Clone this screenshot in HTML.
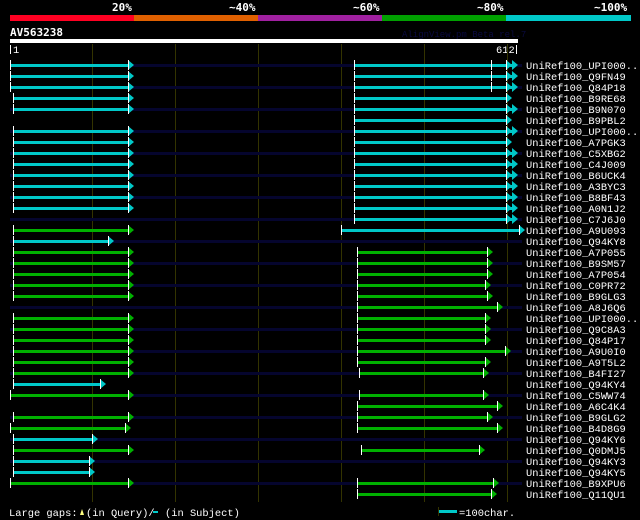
<!DOCTYPE html>
<html><head><meta charset="utf-8"><style>
html,body{margin:0;padding:0;background:#000;width:640px;height:520px;overflow:hidden}
svg{display:block}
text{font-family:"Liberation Mono","DejaVu Sans Mono",monospace;fill:#fff}
.l{font-size:10.4px}
.b{font-size:11px;font-weight:bold;font-family:"DejaVu Sans Mono",monospace}
</style></head><body>
<svg width="640" height="520" viewBox="0 0 640 520">
<text class="b" x="112" y="11">20%</text>
<text class="b" x="229" y="11">~40%</text>
<text class="b" x="353" y="11">~60%</text>
<text class="b" x="477" y="11">~80%</text>
<text class="b" x="594" y="11">~100%</text>
<rect x="10" y="15" width="124" height="6" fill="#ff0022"/>
<rect x="134" y="15" width="124" height="6" fill="#e06000"/>
<rect x="258" y="15" width="124" height="6" fill="#a020a0"/>
<rect x="382" y="15" width="124" height="6" fill="#00a000"/>
<rect x="506" y="15" width="125" height="6" fill="#00c8c8"/>
<text class="b" x="10" y="36">AV563238</text>
<text x="402" y="37" style="font-size:9px;fill:#0a0a40">AlignView.pm Beta rel.7</text>
<rect x="10" y="39" width="508" height="4" fill="#fff"/>
<rect x="10" y="45" width="1" height="9" fill="#fff"/>
<text class="l" x="13" y="53">1</text>
<text class="l" x="496" y="53">612</text>
<rect x="516" y="45" width="1" height="9" fill="#fff"/>
<g fill="#333300">
<rect x="92" y="44" width="1" height="458"/>
<rect x="175" y="44" width="1" height="458"/>
<rect x="258" y="44" width="1" height="458"/>
<rect x="341" y="44" width="1" height="458"/>
<rect x="424" y="44" width="1" height="458"/>
<rect x="507" y="44" width="1" height="458"/>
</g>
<g fill="#05052e">
<rect x="10" y="64" width="512" height="3"/>
<rect x="10" y="86" width="512" height="3"/>
<rect x="10" y="108" width="512" height="3"/>
<rect x="10" y="130" width="512" height="3"/>
<rect x="10" y="152" width="512" height="3"/>
<rect x="10" y="174" width="512" height="3"/>
<rect x="10" y="196" width="512" height="3"/>
<rect x="10" y="218" width="512" height="3"/>
<rect x="10" y="240" width="512" height="3"/>
<rect x="10" y="262" width="512" height="3"/>
<rect x="10" y="284" width="512" height="3"/>
<rect x="10" y="306" width="512" height="3"/>
<rect x="10" y="328" width="512" height="3"/>
<rect x="10" y="350" width="512" height="3"/>
<rect x="10" y="372" width="512" height="3"/>
<rect x="10" y="394" width="512" height="3"/>
<rect x="10" y="416" width="512" height="3"/>
<rect x="10" y="438" width="512" height="3"/>
<rect x="10" y="460" width="512" height="3"/>
<rect x="10" y="482" width="512" height="3"/>
</g>
<g fill="#00c8c8">
<rect x="10" y="64" width="118" height="3"/><rect x="354" y="64" width="158" height="3"/>
<rect x="10" y="75" width="118" height="3"/><rect x="354" y="75" width="158" height="3"/>
<rect x="10" y="86" width="118" height="3"/><rect x="354" y="86" width="158" height="3"/>
<rect x="13" y="97" width="115" height="3"/><rect x="354" y="97" width="152" height="3"/>
<rect x="13" y="108" width="115" height="3"/><rect x="354" y="108" width="158" height="3"/>
<rect x="354" y="119" width="152" height="3"/>
<rect x="13" y="130" width="115" height="3"/><rect x="354" y="130" width="158" height="3"/>
<rect x="13" y="141" width="115" height="3"/><rect x="354" y="141" width="152" height="3"/>
<rect x="13" y="152" width="115" height="3"/><rect x="354" y="152" width="158" height="3"/>
<rect x="13" y="163" width="115" height="3"/><rect x="354" y="163" width="158" height="3"/>
<rect x="13" y="174" width="115" height="3"/><rect x="354" y="174" width="158" height="3"/>
<rect x="13" y="185" width="115" height="3"/><rect x="354" y="185" width="158" height="3"/>
<rect x="13" y="196" width="115" height="3"/><rect x="354" y="196" width="158" height="3"/>
<rect x="13" y="207" width="115" height="3"/><rect x="354" y="207" width="158" height="3"/>
<rect x="354" y="218" width="158" height="3"/>
<rect x="341" y="229" width="178" height="3"/>
<rect x="13" y="240" width="95" height="3"/>
<rect x="13" y="383" width="87" height="3"/>
<rect x="13" y="438" width="79" height="3"/>
<rect x="13" y="460" width="76" height="3"/>
<rect x="13" y="471" width="76" height="3"/>
<polygon points="128,60 134,65 128,70"/><polygon points="512,60 518,65 512,70"/><polygon points="506,60 512,65 506,70"/>
<polygon points="128,71 134,76 128,81"/><polygon points="512,71 518,76 512,81"/><polygon points="506,71 512,76 506,81"/>
<polygon points="128,82 134,87 128,92"/><polygon points="512,82 518,87 512,92"/><polygon points="506,82 512,87 506,92"/>
<polygon points="128,93 134,98 128,103"/><polygon points="506,93 512,98 506,103"/>
<polygon points="128,104 134,109 128,114"/><polygon points="512,104 518,109 512,114"/><polygon points="506,104 512,109 506,114"/>
<polygon points="506,115 512,120 506,125"/>
<polygon points="128,126 134,131 128,136"/><polygon points="512,126 518,131 512,136"/><polygon points="506,126 512,131 506,136"/>
<polygon points="128,137 134,142 128,147"/><polygon points="506,137 512,142 506,147"/>
<polygon points="128,148 134,153 128,158"/><polygon points="512,148 518,153 512,158"/><polygon points="506,148 512,153 506,158"/>
<polygon points="128,159 134,164 128,169"/><polygon points="512,159 518,164 512,169"/><polygon points="506,159 512,164 506,169"/>
<polygon points="128,170 134,175 128,180"/><polygon points="512,170 518,175 512,180"/><polygon points="506,170 512,175 506,180"/>
<polygon points="128,181 134,186 128,191"/><polygon points="512,181 518,186 512,191"/><polygon points="506,181 512,186 506,191"/>
<polygon points="128,192 134,197 128,202"/><polygon points="512,192 518,197 512,202"/><polygon points="506,192 512,197 506,202"/>
<polygon points="128,203 134,208 128,213"/><polygon points="512,203 518,208 512,213"/><polygon points="506,203 512,208 506,213"/>
<polygon points="512,214 518,219 512,224"/><polygon points="506,214 512,219 506,224"/>
<polygon points="519,225 525,230 519,235"/>
<polygon points="108,236 114,241 108,246"/>
<polygon points="100,379 106,384 100,389"/>
<polygon points="92,434 98,439 92,444"/>
<polygon points="89,456 95,461 89,466"/>
<polygon points="89,467 95,472 89,477"/>
</g>
<g fill="#00b000">
<rect x="13" y="229" width="115" height="3"/>
<rect x="13" y="251" width="115" height="3"/><rect x="357" y="251" width="130" height="3"/>
<rect x="13" y="262" width="115" height="3"/><rect x="357" y="262" width="130" height="3"/>
<rect x="13" y="273" width="115" height="3"/><rect x="357" y="273" width="130" height="3"/>
<rect x="13" y="284" width="115" height="3"/><rect x="357" y="284" width="128" height="3"/>
<rect x="13" y="295" width="115" height="3"/><rect x="357" y="295" width="130" height="3"/>
<rect x="357" y="306" width="140" height="3"/>
<rect x="13" y="317" width="115" height="3"/><rect x="357" y="317" width="128" height="3"/>
<rect x="13" y="328" width="115" height="3"/><rect x="357" y="328" width="128" height="3"/>
<rect x="13" y="339" width="115" height="3"/><rect x="357" y="339" width="128" height="3"/>
<rect x="13" y="350" width="115" height="3"/><rect x="357" y="350" width="148" height="3"/>
<rect x="13" y="361" width="115" height="3"/><rect x="357" y="361" width="128" height="3"/>
<rect x="13" y="372" width="115" height="3"/><rect x="359" y="372" width="124" height="3"/>
<rect x="10" y="394" width="118" height="3"/><rect x="359" y="394" width="124" height="3"/>
<rect x="357" y="405" width="140" height="3"/>
<rect x="13" y="416" width="115" height="3"/><rect x="357" y="416" width="130" height="3"/>
<rect x="10" y="427" width="115" height="3"/><rect x="357" y="427" width="140" height="3"/>
<rect x="13" y="449" width="115" height="3"/><rect x="361" y="449" width="118" height="3"/>
<rect x="10" y="482" width="118" height="3"/><rect x="357" y="482" width="136" height="3"/>
<rect x="357" y="493" width="134" height="3"/>
<polygon points="128,225 134,230 128,235"/>
<polygon points="128,247 134,252 128,257"/><polygon points="487,247 493,252 487,257"/>
<polygon points="128,258 134,263 128,268"/><polygon points="487,258 493,263 487,268"/>
<polygon points="128,269 134,274 128,279"/><polygon points="487,269 493,274 487,279"/>
<polygon points="128,280 134,285 128,290"/><polygon points="485,280 491,285 485,290"/>
<polygon points="128,291 134,296 128,301"/><polygon points="487,291 493,296 487,301"/>
<polygon points="497,302 503,307 497,312"/>
<polygon points="128,313 134,318 128,323"/><polygon points="485,313 491,318 485,323"/>
<polygon points="128,324 134,329 128,334"/><polygon points="485,324 491,329 485,334"/>
<polygon points="128,335 134,340 128,345"/><polygon points="485,335 491,340 485,345"/>
<polygon points="128,346 134,351 128,356"/><polygon points="505,346 511,351 505,356"/>
<polygon points="128,357 134,362 128,367"/><polygon points="485,357 491,362 485,367"/>
<polygon points="128,368 134,373 128,378"/><polygon points="483,368 489,373 483,378"/>
<polygon points="128,390 134,395 128,400"/><polygon points="483,390 489,395 483,400"/>
<polygon points="497,401 503,406 497,411"/>
<polygon points="128,412 134,417 128,422"/><polygon points="487,412 493,417 487,422"/>
<polygon points="125,423 131,428 125,433"/><polygon points="497,423 503,428 497,433"/>
<polygon points="128,445 134,450 128,455"/><polygon points="479,445 485,450 479,455"/>
<polygon points="128,478 134,483 128,488"/><polygon points="493,478 499,483 493,488"/>
<polygon points="491,489 497,494 491,499"/>
</g>
<g fill="#fff">
<rect x="128" y="60" width="1" height="10"/><rect x="128" y="71" width="1" height="10"/><rect x="128" y="82" width="1" height="10"/><rect x="128" y="93" width="1" height="10"/><rect x="128" y="104" width="1" height="10"/>
<rect x="128" y="126" width="1" height="10"/><rect x="128" y="137" width="1" height="10"/><rect x="128" y="148" width="1" height="10"/><rect x="128" y="159" width="1" height="10"/><rect x="128" y="170" width="1" height="10"/><rect x="128" y="181" width="1" height="10"/><rect x="128" y="192" width="1" height="10"/><rect x="128" y="203" width="1" height="10"/>
<rect x="128" y="225" width="1" height="10"/><rect x="128" y="247" width="1" height="10"/><rect x="128" y="258" width="1" height="10"/><rect x="128" y="269" width="1" height="10"/><rect x="128" y="280" width="1" height="10"/><rect x="128" y="291" width="1" height="10"/>
<rect x="128" y="313" width="1" height="10"/><rect x="128" y="324" width="1" height="10"/><rect x="128" y="335" width="1" height="10"/><rect x="128" y="346" width="1" height="10"/><rect x="128" y="357" width="1" height="10"/><rect x="128" y="368" width="1" height="10"/>
<rect x="128" y="390" width="1" height="10"/><rect x="128" y="412" width="1" height="10"/><rect x="125" y="423" width="1" height="10"/><rect x="128" y="445" width="1" height="10"/><rect x="128" y="478" width="1" height="10"/>
<rect x="108" y="236" width="1" height="10"/><rect x="100" y="379" width="1" height="10"/><rect x="92" y="434" width="1" height="10"/><rect x="89" y="456" width="1" height="10"/><rect x="89" y="467" width="1" height="10"/>
<rect x="506" y="60" width="1" height="10"/><rect x="506" y="71" width="1" height="10"/><rect x="506" y="82" width="1" height="10"/><rect x="506" y="93" width="1" height="10"/><rect x="506" y="104" width="1" height="10"/><rect x="506" y="115" width="1" height="10"/><rect x="506" y="126" width="1" height="10"/><rect x="506" y="137" width="1" height="10"/><rect x="506" y="148" width="1" height="10"/><rect x="506" y="159" width="1" height="10"/><rect x="506" y="170" width="1" height="10"/><rect x="506" y="181" width="1" height="10"/><rect x="506" y="192" width="1" height="10"/><rect x="506" y="203" width="1" height="10"/><rect x="506" y="214" width="1" height="10"/>
<rect x="491" y="60" width="1" height="10"/><rect x="491" y="71" width="1" height="10"/><rect x="491" y="82" width="1" height="10"/>
<rect x="519" y="225" width="1" height="10"/>
<rect x="487" y="247" width="1" height="10"/><rect x="487" y="258" width="1" height="10"/><rect x="487" y="269" width="1" height="10"/><rect x="485" y="280" width="1" height="10"/><rect x="487" y="291" width="1" height="10"/><rect x="497" y="302" width="1" height="10"/><rect x="485" y="313" width="1" height="10"/><rect x="485" y="324" width="1" height="10"/><rect x="485" y="335" width="1" height="10"/><rect x="505" y="346" width="1" height="10"/><rect x="485" y="357" width="1" height="10"/><rect x="483" y="368" width="1" height="10"/><rect x="483" y="390" width="1" height="10"/><rect x="497" y="401" width="1" height="10"/><rect x="487" y="412" width="1" height="10"/><rect x="497" y="423" width="1" height="10"/><rect x="479" y="445" width="1" height="10"/><rect x="493" y="478" width="1" height="10"/><rect x="491" y="489" width="1" height="10"/>
<rect x="10" y="60" width="1" height="10"/><rect x="10" y="71" width="1" height="10"/><rect x="10" y="82" width="1" height="10"/><rect x="13" y="93" width="1" height="10"/><rect x="13" y="104" width="1" height="10"/>
<rect x="13" y="126" width="1" height="10"/><rect x="13" y="137" width="1" height="10"/><rect x="13" y="148" width="1" height="10"/><rect x="13" y="159" width="1" height="10"/><rect x="13" y="170" width="1" height="10"/><rect x="13" y="181" width="1" height="10"/><rect x="13" y="192" width="1" height="10"/><rect x="13" y="203" width="1" height="10"/>
<rect x="354" y="60" width="1" height="10"/><rect x="354" y="71" width="1" height="10"/><rect x="354" y="82" width="1" height="10"/><rect x="354" y="93" width="1" height="10"/><rect x="354" y="104" width="1" height="10"/><rect x="354" y="115" width="1" height="10"/><rect x="354" y="126" width="1" height="10"/><rect x="354" y="137" width="1" height="10"/><rect x="354" y="148" width="1" height="10"/><rect x="354" y="159" width="1" height="10"/><rect x="354" y="170" width="1" height="10"/><rect x="354" y="181" width="1" height="10"/><rect x="354" y="192" width="1" height="10"/><rect x="354" y="203" width="1" height="10"/><rect x="354" y="214" width="1" height="10"/>
<rect x="341" y="225" width="1" height="10"/><rect x="13" y="225" width="1" height="10"/><rect x="13" y="236" width="1" height="10"/>
<rect x="13" y="247" width="1" height="10"/><rect x="13" y="258" width="1" height="10"/><rect x="13" y="269" width="1" height="10"/><rect x="13" y="280" width="1" height="10"/><rect x="13" y="291" width="1" height="10"/><rect x="13" y="313" width="1" height="10"/><rect x="13" y="324" width="1" height="10"/><rect x="13" y="335" width="1" height="10"/><rect x="13" y="346" width="1" height="10"/><rect x="13" y="357" width="1" height="10"/><rect x="13" y="368" width="1" height="10"/><rect x="13" y="379" width="1" height="10"/><rect x="10" y="390" width="1" height="10"/><rect x="13" y="412" width="1" height="10"/><rect x="10" y="423" width="1" height="10"/><rect x="13" y="434" width="1" height="10"/><rect x="13" y="445" width="1" height="10"/><rect x="13" y="456" width="1" height="10"/><rect x="13" y="467" width="1" height="10"/><rect x="10" y="478" width="1" height="10"/>
<rect x="357" y="247" width="1" height="10"/><rect x="357" y="258" width="1" height="10"/><rect x="357" y="269" width="1" height="10"/><rect x="357" y="280" width="1" height="10"/><rect x="357" y="291" width="1" height="10"/><rect x="357" y="302" width="1" height="10"/><rect x="357" y="313" width="1" height="10"/><rect x="357" y="324" width="1" height="10"/><rect x="357" y="335" width="1" height="10"/><rect x="357" y="346" width="1" height="10"/><rect x="357" y="357" width="1" height="10"/><rect x="359" y="368" width="1" height="10"/><rect x="359" y="390" width="1" height="10"/><rect x="357" y="401" width="1" height="10"/><rect x="357" y="412" width="1" height="10"/><rect x="357" y="423" width="1" height="10"/><rect x="361" y="445" width="1" height="10"/><rect x="357" y="478" width="1" height="10"/><rect x="357" y="489" width="1" height="10"/>
</g>
<g>
<text class="l" x="526" y="69">UniRef100_UPI000..</text>
<text class="l" x="526" y="80">UniRef100_Q9FN49</text>
<text class="l" x="526" y="91">UniRef100_Q84P18</text>
<text class="l" x="526" y="102">UniRef100_B9RE68</text>
<text class="l" x="526" y="113">UniRef100_B9N070</text>
<text class="l" x="526" y="124">UniRef100_B9PBL2</text>
<text class="l" x="526" y="135">UniRef100_UPI000..</text>
<text class="l" x="526" y="146">UniRef100_A7PGK3</text>
<text class="l" x="526" y="157">UniRef100_C5XBG2</text>
<text class="l" x="526" y="168">UniRef100_C4J009</text>
<text class="l" x="526" y="179">UniRef100_B6UCK4</text>
<text class="l" x="526" y="190">UniRef100_A3BYC3</text>
<text class="l" x="526" y="201">UniRef100_B8BF43</text>
<text class="l" x="526" y="212">UniRef100_A0N1J2</text>
<text class="l" x="526" y="223">UniRef100_C7J6J0</text>
<text class="l" x="526" y="234">UniRef100_A9U093</text>
<text class="l" x="526" y="245">UniRef100_Q94KY8</text>
<text class="l" x="526" y="256">UniRef100_A7P055</text>
<text class="l" x="526" y="267">UniRef100_B9SM57</text>
<text class="l" x="526" y="278">UniRef100_A7P054</text>
<text class="l" x="526" y="289">UniRef100_C0PR72</text>
<text class="l" x="526" y="300">UniRef100_B9GLG3</text>
<text class="l" x="526" y="311">UniRef100_A8J6Q6</text>
<text class="l" x="526" y="322">UniRef100_UPI000..</text>
<text class="l" x="526" y="333">UniRef100_Q9C8A3</text>
<text class="l" x="526" y="344">UniRef100_Q84P17</text>
<text class="l" x="526" y="355">UniRef100_A9U0I0</text>
<text class="l" x="526" y="366">UniRef100_A9T5L2</text>
<text class="l" x="526" y="377">UniRef100_B4FI27</text>
<text class="l" x="526" y="388">UniRef100_Q94KY4</text>
<text class="l" x="526" y="399">UniRef100_C5WW74</text>
<text class="l" x="526" y="410">UniRef100_A6C4K4</text>
<text class="l" x="526" y="421">UniRef100_B9GLG2</text>
<text class="l" x="526" y="432">UniRef100_B4D8G9</text>
<text class="l" x="526" y="443">UniRef100_Q94KY6</text>
<text class="l" x="526" y="454">UniRef100_Q0DMJ5</text>
<text class="l" x="526" y="465">UniRef100_Q94KY3</text>
<text class="l" x="526" y="476">UniRef100_Q94KY5</text>
<text class="l" x="526" y="487">UniRef100_B9XPU6</text>
<text class="l" x="526" y="498">UniRef100_Q11QU1</text>
</g>
<text class="l" x="9" y="516">Large gaps:</text>
<polygon points="80,515 84,515 82,509" fill="#ffff80"/>
<text class="l" x="86" y="516">(in Query)/</text>
<rect x="153" y="511" width="5" height="2" fill="#00c8c8"/>
<text class="l" x="165" y="516">(in Subject)</text>
<rect x="438" y="507" width="1" height="9" fill="#333300"/>
<rect x="439" y="510" width="18" height="3" fill="#00c8c8"/>
<text class="l" x="459" y="516">=100char.</text>
</svg>
</body></html>
